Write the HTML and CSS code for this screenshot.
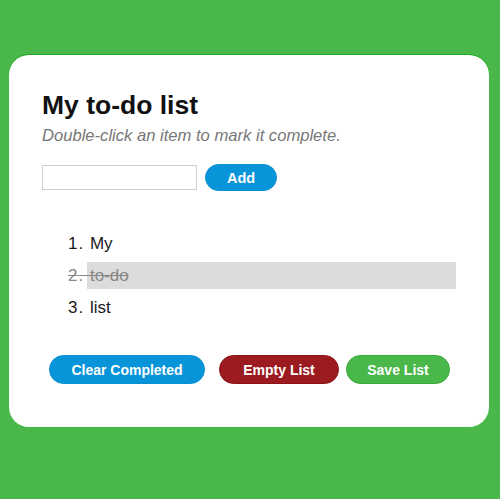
FILE: index.html
```html
<!DOCTYPE html>
<html>
<head>
<meta charset="utf-8">
<link rel="stylesheet" href="styles.css">
</head>
<body>
<div class="card">
  <h1 class="title">My to-do list</h1>
  <p class="subtitle">Double-click an item to mark it complete.</p>
  <div class="form-row">
    <input class="task-input" type="text">
    <button class="btn btn-blue btn-add">Add</button>
  </div>
  <ol class="todo-list">
    <li class="todo-item">My</li>
    <li class="todo-item done">to-do</li>
    <li class="todo-item">list</li>
  </ol>
  <div class="actions">
    <button class="btn btn-blue btn-clear">Clear Completed</button>
    <button class="btn btn-red btn-empty">Empty List</button>
    <button class="btn btn-green btn-save">Save List</button>
  </div>
</div>
</body>
</html>
```

FILE: styles.css
```css
html, body {
  margin: 0;
  padding: 0;
}
body {
  background: #4ab74a;
  width: 500px;
  height: 499px;
  font-family: "Liberation Sans", Arial, sans-serif;
  overflow: hidden;
}
.card {
  margin: 55px 0 0 9px;
  width: 480px;
  box-sizing: border-box;
  background: #fff;
  border-radius: 20px;
  padding: 35px 33px 43px 33px;
  box-shadow: 0 -1px 0 #1faa1f;
}
.title {
  margin: 0 0 6px 0;
  font-size: 26.5px;
  line-height: 30px;
  font-weight: bold;
  color: #111;
}
.subtitle {
  margin: 0 0 19px 0;
  font-size: 16.6px;
  line-height: 19px;
  font-style: italic;
  color: #777;
}
.form-row {
  display: flex;
  align-items: center;
  gap: 8px;
  height: 27px;
}
.task-input {
  box-sizing: border-box;
  width: 155px;
  height: 25px;
  margin: 0;
  border: 1px solid #cfcfcf;
  padding: 2px 4px;
  font-size: 14px;
  font-family: inherit;
}
.btn {
  box-sizing: border-box;
  height: 29px;
  border-radius: 15px;
  border: 1px solid transparent;
  font-family: "Liberation Sans", Arial, sans-serif;
  font-weight: bold;
  font-size: 14px;
  color: #fff;
  padding: 0 22px;
  cursor: pointer;
}
.btn-add {
  height: 27px;
  width: 72px;
  padding: 0;
  font-size: 14.5px;
}
.btn-blue {
  background: #0894d9;
  border-color: #0a8fd0;
}
.btn-red {
  background: #9b1b20;
  border-color: #8a1418;
}
.btn-green {
  background: #4ab74a;
  border-color: #38a838;
}
.todo-list {
  margin: 39px 0 0 0;
  padding: 0 0 0 45px;
  list-style: none;
  counter-reset: item;
  display: flex;
  flex-direction: column;
  gap: 5px;
}
.todo-item {
  counter-increment: item;
  height: 27px;
  line-height: 27px;
  font-size: 17px;
  color: #1a1a1a;
  padding-left: 2px;
  text-indent: -21px;
  white-space: nowrap;
}
.todo-item::before {
  content: counter(item) ".\00a0";
  letter-spacing: 1px;
}
.todo-item.done {
  background: #dcdcdc;
  color: #888;
  text-decoration: line-through;
}
.actions {
  display: flex;
  margin: 34px 0 0 7px;
}
.btn-clear {
  width: 156px;
  padding: 0;
}
.btn-empty {
  width: 120px;
  padding: 0;
  margin-left: 14px;
}
.btn-save {
  width: 104px;
  padding: 0;
  margin-left: 7px;
}
```
